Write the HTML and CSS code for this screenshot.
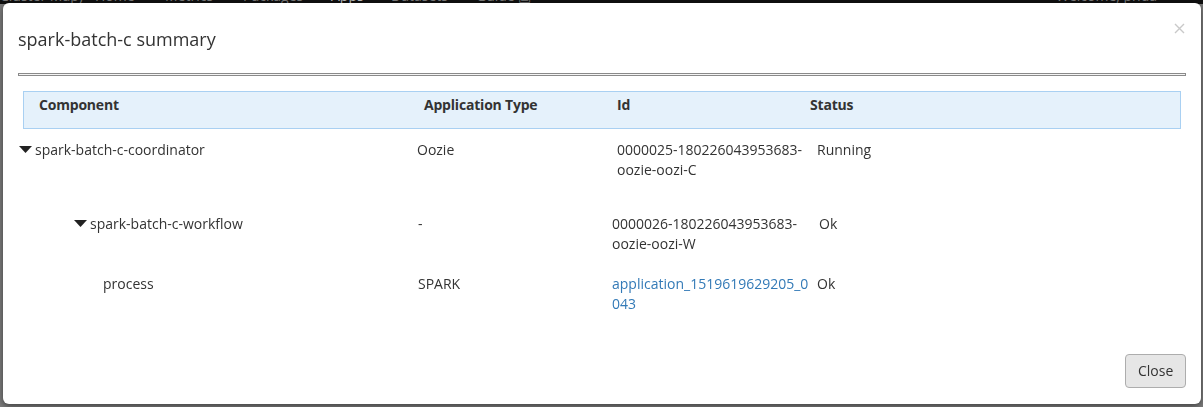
FILE: index.html
```html
<!DOCTYPE html>
<html>
<head>
<meta charset="utf-8">
<link rel="stylesheet" href="styles.css">
</head>
<body>
<nav class="navbar">
  <span class="nav-item brand">Cluster Map)</span>
  <span class="nav-item n-home">Home</span>
  <span class="nav-item n-metrics">Metrics</span>
  <span class="nav-item n-packages">Packages</span>
  <span class="nav-item n-apps active">Apps</span>
  <span class="nav-item n-datasets">Datasets</span>
  <span class="nav-item n-guide">Guide ▣</span>
  <span class="nav-item n-welcome">Welcome, pnda</span>
</nav>
<div class="page-body"></div>

<div class="modal">
  <div class="modal-header">
    <h4 class="modal-title">spark-batch-c summary</h4>
    <span class="close-x"><svg width="11" height="11" viewBox="0 0 11 11"><path d="M1 1 L10 10 M10 1 L1 10" stroke="#c9c9c9" stroke-width="1.4" fill="none"/></svg></span>
  </div>
  <div class="rule"></div>
  <div class="modal-body">
    <div class="thead">
      <span class="th th-comp">Component</span>
      <span class="th th-type">Application Type</span>
      <span class="th th-id">Id</span>
      <span class="th th-status">Status</span>
    </div>

    <div class="trow r1">
      <span class="cell name"><svg class="caret" width="13" height="7" viewBox="0 0 13 7"><polygon points="0,0 13,0 6.5,7" fill="#222"/></svg>spark-batch-c-coordinator</span>
      <span class="cell type">Oozie</span>
      <span class="cell id">0000025-180226043953683-oozie-oozi-C</span>
      <span class="cell status">Running</span>
    </div>

    <div class="trow r2">
      <span class="cell name"><svg class="caret" width="13" height="7" viewBox="0 0 13 7"><polygon points="0,0 13,0 6.5,7" fill="#222"/></svg>spark-batch-c-workflow</span>
      <span class="cell type">-</span>
      <span class="cell id">0000026-180226043953683-oozie-oozi-W</span>
      <span class="cell status">Ok</span>
    </div>

    <div class="trow r3">
      <span class="cell name">process</span>
      <span class="cell type">SPARK</span>
      <span class="cell id"><a class="app-link" href="#">application_1519619629205_0043</a></span>
      <span class="cell status">Ok</span>
    </div>
  </div>
  <div class="modal-footer">
    <button class="btn">Close</button>
  </div>
</div>
</body>
</html>
```

FILE: styles.css
```css
html, body {
  margin: 0;
  padding: 0;
}
body {
  width: 1203px;
  height: 407px;
  overflow: hidden;
  background: #7c7c7c;
  font-family: "Open Sans", "Noto Sans", sans-serif;
  font-size: 14px;
  line-height: 20px;
  color: #333;
}
.navbar {
  height: 4px;
  background: #101010;
  display: flex;
  overflow: hidden;
  position: relative;
}
.nav-item {
  display: block;
  margin-top: -13px;
  height: 17px;
  color: #7a7a7a;
  font-size: 14px;
  line-height: 17px;
  white-space: nowrap;
}
.brand { margin-left: 0; width: 95px; }
.n-home { width: 70px; }
.n-metrics { width: 78px; }
.n-packages { width: 88px; }
.n-apps { width: 60px; color: #bdbdbd; }
.n-datasets { width: 85px; }
.n-guide { width: 580px; }
.page-body {
  height: 403px;
  background: #7c7c7c;
}

.modal {
  position: fixed;
  left: 3px;
  top: 3px;
  width: 1198px;
  height: 401px;
  box-sizing: border-box;
  background: #fff;
  border-radius: 6px;
  box-shadow: 0 2px 6px rgba(0,0,0,0.5);
  display: flex;
  flex-direction: column;
}
.modal-header {
  position: relative;
  padding: 26px 15px 0 15px;
}
.modal-title {
  margin: 0;
  font-size: 18px;
  line-height: 20px;
  font-weight: 400;
  color: #333;
}
.close-x {
  position: absolute;
  right: 16px;
  top: 20px;
  width: 11px;
  height: 11px;
  display: block;
}
.close-x svg { display: block; }
.rule {
  margin: 24px 15px 0 15px;
  height: 1px;
  border: 1px solid #8a8a8a;
  background: #f4f4f4;
}
.modal-body {
  padding: 15px 0 0 0;
}
.thead {
  margin: 0 20px;
  height: 38px;
  box-sizing: border-box;
  background: #e5f1fb;
  border: 1px solid #a9d0f2;
  display: flex;
  padding: 3px 0 0 15px;
  font-weight: 700;
  color: #333;
  letter-spacing: -0.2px;
}
.th { display: block; }
.th-comp { width: 385px; }
.th-type { width: 193px; }
.th-id { width: 193px; }

.trow {
  display: flex;
  align-items: flex-start;
}
.cell { display: block; }
.caret {
  display: inline-block;
  vertical-align: middle;
  margin: -3px 3px 0 0;
}
.r1 { margin: 11px 0 0 16px; }
.r1 .name { width: 398px; }
.r1 .type { width: 200px; }
.r1 .id { width: 200px; }

.r2 { margin: 34px 0 0 71px; }
.r2 .name { width: 344px; }
.r2 .type { width: 194px; }
.r2 .id { width: 207px; }

.r3 { margin: 20px 0 0 100px; }
.r3 .name { width: 315px; }
.r3 .type { width: 194px; }
.r3 .id { width: 198px; margin-right: 7px; word-break: break-all; }

.app-link {
  color: #337ab7;
  text-decoration: none;
}

.modal-footer {
  margin-top: auto;
  display: flex;
  justify-content: flex-end;
  padding: 0 15px 16px 0;
}
.btn {
  font-family: "Open Sans", "Noto Sans", sans-serif;
  font-size: 14px;
  line-height: 20px;
  color: #333;
  background: #e6e6e6;
  border: 1px solid #adadad;
  border-radius: 4px;
  padding: 6px 12px;
  height: 34px;
  width: 61px;
}
```
